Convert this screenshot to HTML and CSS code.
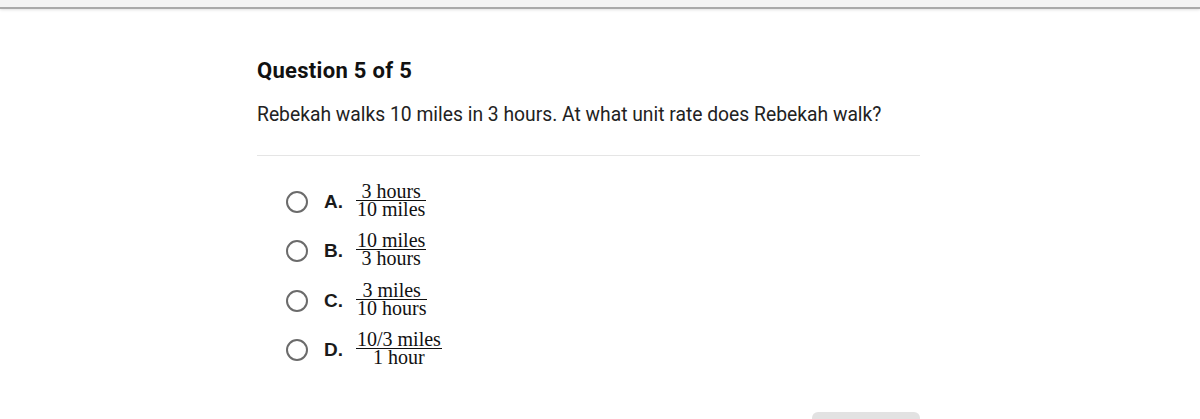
FILE: index.html
```html
<!DOCTYPE html>
<html>
<head>
<meta charset="utf-8">
<link rel="stylesheet" href="styles.css">
</head>
<body>
<div class="topbar"></div>
<main class="quiz">
  <h1 class="title">Question 5 of 5</h1>
  <p class="prompt">Rebekah walks 10 miles in 3 hours. At what unit rate does Rebekah walk?</p>
  <hr class="divider">
  <ul class="options">
    <li class="option"><span class="radio"></span><span class="letter">A.</span><span class="frac"><span class="num">3 hours</span><span class="den">10 miles</span></span></li>
    <li class="option"><span class="radio"></span><span class="letter">B.</span><span class="frac"><span class="num">10 miles</span><span class="den">3 hours</span></span></li>
    <li class="option"><span class="radio"></span><span class="letter">C.</span><span class="frac"><span class="num">3 miles</span><span class="den">10 hours</span></span></li>
    <li class="option"><span class="radio"></span><span class="letter">D.</span><span class="frac"><span class="num">10/3 miles</span><span class="den">1 hour</span></span></li>
  </ul>
  <div class="footer"><span class="submit"></span></div>
</main>
</body>
</html>
```
FILE: styles.css
```css
html, body {
  margin: 0;
  padding: 0;
  background: #ffffff;
  overflow: hidden;
}
body {
  width: 1200px;
  height: 419px;
  font-family: Roboto, "Liberation Sans", sans-serif;
  color: #1a1a1a;
}
.topbar {
  height: 7px;
  background: #f3f3f3;
  border-bottom: 2px solid #a9a9a9;
  box-shadow: 0 1px 3px rgba(0,0,0,0.12);
}
.quiz {
  width: 663px;
  margin-left: 257px;
}
.title {
  margin: 49px 0 0;
  font-size: 22px;
  font-weight: 700;
  line-height: 26px;
  letter-spacing: 0.3px;
  color: #111;
}
.prompt {
  margin: 20px 0 0;
  font-size: 19.3px;
  line-height: 22px;
  color: #222;
}
.divider {
  margin: 29px 0 0;
  border: 0;
  border-top: 1px solid #e5e5e5;
  height: 0;
}
.options {
  list-style: none;
  margin: 21px 0 0;
  padding: 0 0 0 29px;
}
.option {
  display: flex;
  align-items: center;
  height: 49.5px;
}
.radio {
  width: 18px;
  height: 18px;
  border: 2px solid #6b6b6b;
  border-radius: 50%;
  box-sizing: content-box;
  margin-right: 16px;
  flex: none;
}
.letter {
  font-family: "Liberation Sans", Arial, sans-serif;
  font-weight: 700;
  font-size: 19px;
  color: #1a1a1a;
  width: 32px;
}
.frac {
  display: inline-flex;
  flex-direction: column;
  align-items: center;
  font-family: "Liberation Serif", "Times New Roman", serif;
  font-size: 20px;
  color: #111;
  margin-top: -3px;
}
.num {
  line-height: 17px;
  padding: 0 1px;
  border-bottom: 1.5px solid #111;
  align-self: stretch;
  text-align: center;
}
.den {
  line-height: 17px;
  padding: 0 1px;
}
.footer {
  display: flex;
  justify-content: flex-end;
  margin-top: 37px;
}
.submit {
  width: 108px;
  height: 20px;
  background: #e2e2e2;
  border-radius: 6px 6px 0 0;
}
```
